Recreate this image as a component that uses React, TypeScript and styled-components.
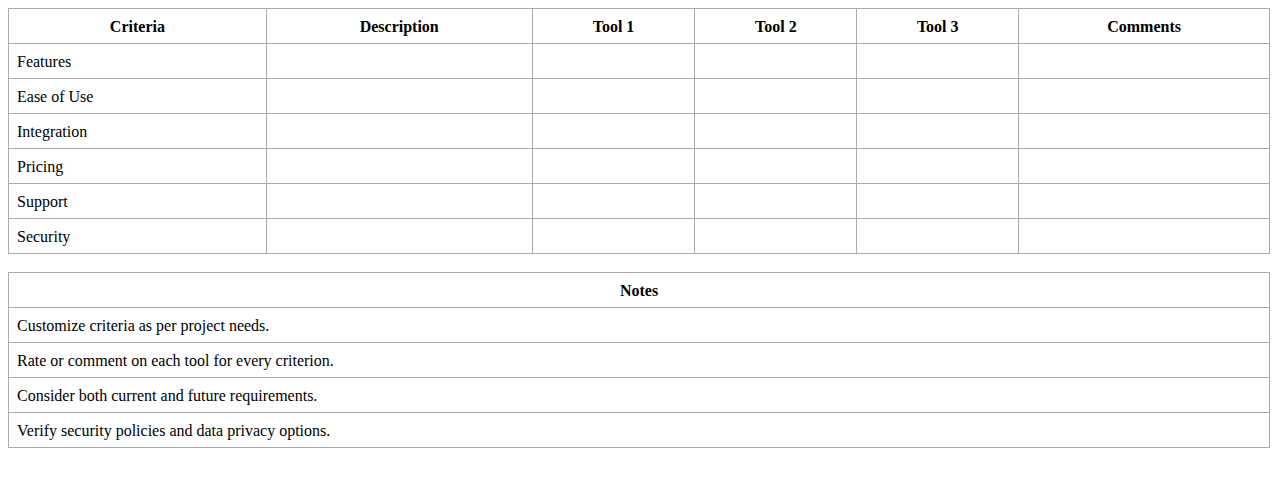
import React from "react";
import styled, { createGlobalStyle } from "styled-components";

const GlobalStyle = createGlobalStyle`
  body {
    margin: 8px;
    background: #fff;
    font-family: "Liberation Serif", "Times New Roman", serif;
    font-size: 16px;
    color: #000;
  }
`;

const Table = styled.table`
  width: 100%;
  border-collapse: collapse;
  margin-bottom: 18px;
  th,
  td {
    border: 1px solid #aaa;
    padding: 9px 8px 7px;
    height: 18px;
    line-height: 18px;
  }
  th {
    font-weight: 700;
    text-align: center;
  }
  td {
    text-align: left;
  }
`;

const criteria = ["Features", "Ease of Use", "Integration", "Pricing", "Support", "Security"];

const columns: { label: string; width: number }[] = [
  { label: "Criteria", width: 258 },
  { label: "Description", width: 266 },
  { label: "Tool 1", width: 163 },
  { label: "Tool 2", width: 162 },
  { label: "Tool 3", width: 162 },
  { label: "Comments", width: 251 },
];

const notes = [
  "Customize criteria as per project needs.",
  "Rate or comment on each tool for every criterion.",
  "Consider both current and future requirements.",
  "Verify security policies and data privacy options.",
];

const App: React.FC = () => {
  return (
    <>
      <GlobalStyle />
      <Table>
        <colgroup>
          {columns.map((c) => (
            <col key={c.label} style={{ width: c.width }} />
          ))}
        </colgroup>
        <thead>
          <tr>
            {columns.map((c) => (
              <th key={c.label}>{c.label}</th>
            ))}
          </tr>
        </thead>
        <tbody>
          {criteria.map((name) => (
            <tr key={name}>
              <td>{name}</td>
              <td></td>
              <td></td>
              <td></td>
              <td></td>
              <td></td>
            </tr>
          ))}
        </tbody>
      </Table>
      <Table>
        <thead>
          <tr>
            <th>Notes</th>
          </tr>
        </thead>
        <tbody>
          {notes.map((n) => (
            <tr key={n}>
              <td>{n}</td>
            </tr>
          ))}
        </tbody>
      </Table>
    </>
  );
};

export default App;
